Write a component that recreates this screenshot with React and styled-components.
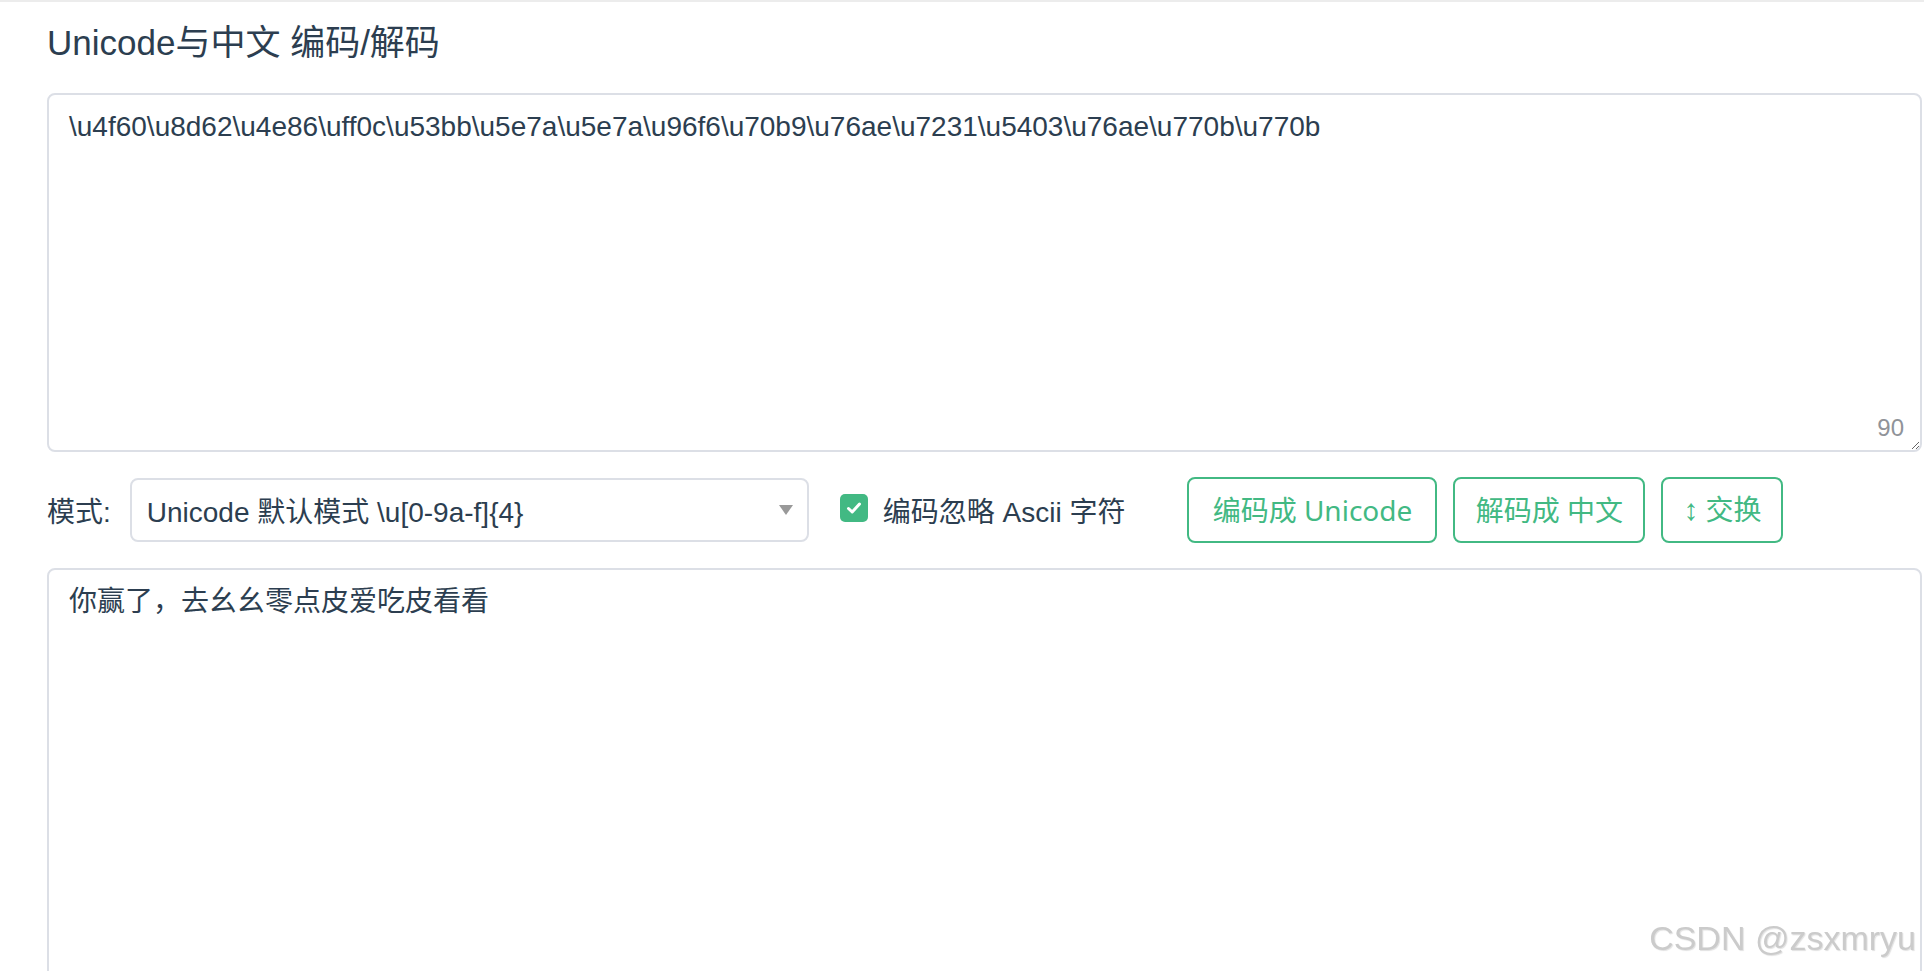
import React, { useState } from "react";
import styled, { createGlobalStyle } from "styled-components";

const GlobalStyle = createGlobalStyle`
  html, body { margin: 0; padding: 0; background: #fff; }
  body {
    font-family: "Liberation Sans", "Noto Sans CJK SC", sans-serif;
    color: #2c3e50;
    overflow: hidden;
  }
  * { box-sizing: border-box; }
`;

const Page = styled.div`
  border-top: 2px solid #ececec;
  padding: 21px 2px 0 47px;
  height: 971px;
`;

const Title = styled.h2`
  margin: 0;
  font-size: 35px;
  font-weight: 400;
  line-height: 40px;
  color: #2c3e50;
`;

const Field = styled.div`
  position: relative;
  margin-top: ${(p) => p.$mt || 0}px;
`;

const TextArea = styled.textarea`
  display: block;
  width: 100%;
  height: ${(p) => p.$h}px;
  padding: 11px 20px;
  border: 2px solid #dcdfe6;
  border-radius: 8px;
  font-family: "Liberation Sans", "Noto Sans CJK SC", sans-serif;
  font-size: 28px;
  line-height: 1.5;
  color: #2c3e50;
  background: #fff;
  resize: vertical;
  outline: none;
`;

const Counter = styled.span`
  position: absolute;
  right: 18px;
  bottom: 10px;
  font-size: 24px;
  color: #909399;
  background: #fff;
`;

const Toolbar = styled.div`
  display: flex;
  align-items: center;
  height: 66px;
  margin: 25px 0;
`;

const Label = styled.span`
  font-size: 28px;
  margin-right: 19px;
  color: #2c3e50;
`;

const SelectBox = styled.div`
  width: 679px;
  height: 64px;
  border: 2px solid #dcdfe6;
  border-radius: 8px;
  display: flex;
  align-items: center;
  justify-content: space-between;
  padding: 0 14px 0 15px;
  font-size: 28px;
  color: #2c3e50;
  background: #fff;
`;

const Caret = styled.svg`
  width: 14px;
  height: 10px;
  fill: #999;
`;

const CheckLabel = styled.label`
  display: flex;
  align-items: center;
  margin-left: 31px;
  font-size: 28px;
  color: #2c3e50;
`;

const CheckMark = styled.span`
  width: 28px;
  height: 28px;
  border-radius: 5px;
  background: #42b983;
  display: flex;
  align-items: center;
  justify-content: center;
  margin-right: 15px;
  margin-top: -4px;
`;

const Buttons = styled.div`
  display: flex;
  gap: 16px;
  margin-left: 62px;
`;

const Button = styled.button`
  width: ${(p) => p.$w}px;
  height: 66px;
  padding: 0;
  border: 2px solid #42b983;
  border-radius: 8px;
  background: #fff;
  color: #42b983;
  font-family: "Noto Sans", "Noto Sans CJK SC", sans-serif;
  font-size: 28px;
  line-height: 1;
  white-space: nowrap;
  cursor: pointer;
`;

const Arrow = styled.span`
  font-family: "Liberation Sans", sans-serif;
  font-size: 30px;
  margin-right: 7px;
`;

const Watermark = styled.div`
  position: fixed;
  top: 921px;
  right: 8px;
  font-family: "Liberation Sans", sans-serif;
  font-size: 34px;
  line-height: 34px;
  color: #cbcbcb;
  text-shadow: 1px 1px 1px rgba(0, 0, 0, 0.12), -1px -1px 0 rgba(255, 255, 255, 0.8);
  pointer-events: none;
`;

const ENCODED =
  "\\u4f60\\u8d62\\u4e86\\uff0c\\u53bb\\u5e7a\\u5e7a\\u96f6\\u70b9\\u76ae\\u7231\\u5403\\u76ae\\u770b\\u770b";
const DECODED = "你赢了，去幺幺零点皮爱吃皮看看";

export default function App() {
  const [src, setSrc] = useState(ENCODED);
  const [dst, setDst] = useState(DECODED);

  return (
    <>
      <GlobalStyle />
      <Page>
        <Title>Unicode与中文 编码/解码</Title>
        <Field $mt={30}>
          <TextArea $h={359} value={src} onChange={(e) => setSrc(e.target.value)} />
          <Counter>{src.length}</Counter>
        </Field>
        <Toolbar>
          <Label>模式:</Label>
          <SelectBox>
            <span>Unicode 默认模式 \u[0-9a-f]{"{4}"}</span>
            <Caret viewBox="0 0 14 10">
              <polygon points="0,0 14,0 7,10" />
            </Caret>
          </SelectBox>
          <CheckLabel>
            <CheckMark>
              <svg width="16" height="14" viewBox="0 0 16 14">
                <path d="M2.5 7.5 L6.2 11 L13.5 3" fill="none" stroke="#fff" strokeWidth="3" strokeLinecap="round" strokeLinejoin="round" />
              </svg>
            </CheckMark>
            编码忽略 Ascii 字符
          </CheckLabel>
          <Buttons>
            <Button $w={250}>编码成 Unicode</Button>
            <Button $w={192}>解码成 中文</Button>
            <Button $w={122}>
              <Arrow>↕</Arrow>交换
            </Button>
          </Buttons>
        </Toolbar>
        <Field>
          <TextArea $h={420} value={dst} onChange={(e) => setDst(e.target.value)} />
        </Field>
      </Page>
      <Watermark>CSDN @zsxmryu</Watermark>
    </>
  );
}
